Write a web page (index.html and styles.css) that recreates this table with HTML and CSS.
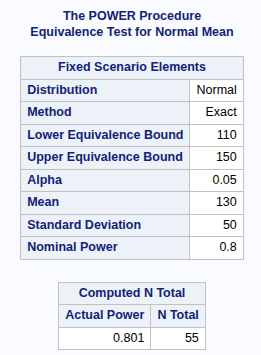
FILE: index.html
```html
<!DOCTYPE html>
<html>
<head>
<meta charset="utf-8">
<link rel="stylesheet" href="styles.css">
</head>
<body>
<div class="page">
  <div class="titles">
    <div class="title">The POWER Procedure</div>
    <div class="title">Equivalence Test for Normal Mean</div>
  </div>
  <table class="tbl fixed">
    <thead>
      <tr><th colspan="2" class="hdr">Fixed Scenario Elements</th></tr>
    </thead>
    <tbody>
      <tr><th class="rowh">Distribution</th><td>Normal</td></tr>
      <tr><th class="rowh">Method</th><td>Exact</td></tr>
      <tr><th class="rowh">Lower Equivalence Bound</th><td>110</td></tr>
      <tr><th class="rowh">Upper Equivalence Bound</th><td>150</td></tr>
      <tr><th class="rowh">Alpha</th><td>0.05</td></tr>
      <tr><th class="rowh">Mean</th><td>130</td></tr>
      <tr><th class="rowh">Standard Deviation</th><td>50</td></tr>
      <tr><th class="rowh">Nominal Power</th><td>0.8</td></tr>
    </tbody>
  </table>
  <table class="tbl computed">
    <thead>
      <tr><th colspan="2" class="hdr">Computed N Total</th></tr>
      <tr><th class="hdr">Actual Power</th><th class="hdr">N Total</th></tr>
    </thead>
    <tbody>
      <tr><td>0.801</td><td>55</td></tr>
    </tbody>
  </table>
</div>
</body>
</html>
```
FILE: styles.css
```css
html, body {
  margin: 0;
  padding: 0;
  background: #fafbfe;
}

.page {
  padding: 8px 0 0 3px;
  font-family: "Liberation Sans", Arial, sans-serif;
  font-size: 12.5px;
  display: flex;
  flex-direction: column;
  align-items: center;
}

.titles {
  text-align: center;
  color: #112277;
  font-weight: bold;
  line-height: 16px;
  margin-bottom: 16px;
}

.tbl {
  border-collapse: collapse;
  border: 1px solid #c1c1c1;
  background: #ffffff;
}

.tbl th,
.tbl td {
  border: 1px solid #c1c1c1;
  padding: 3px 6px 3px 6px;
  line-height: 15.5px;
  white-space: nowrap;
}

.tbl th {
  background: #edf2f9;
  color: #112277;
  font-weight: bold;
}

.tbl .hdr {
  text-align: center;
}

.tbl .rowh {
  text-align: left;
}

.tbl td {
  text-align: right;
  color: #000000;
}

.computed {
  margin-top: 22px;
}
```
